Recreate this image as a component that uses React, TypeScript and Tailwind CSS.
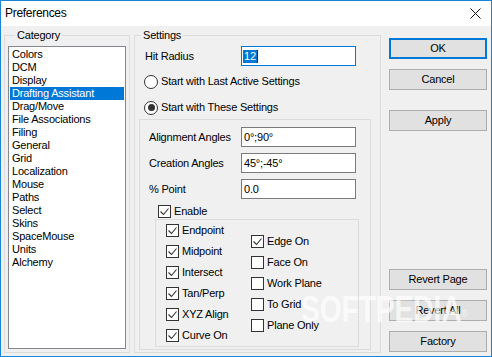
import React from "react";

const categories = [
  "Colors",
  "DCM",
  "Display",
  "Drafting Assistant",
  "Drag/Move",
  "File Associations",
  "Filing",
  "General",
  "Grid",
  "Localization",
  "Mouse",
  "Paths",
  "Select",
  "Skins",
  "SpaceMouse",
  "Units",
  "Alchemy",
];

const snapLeft = [
  { label: "Endpoint", checked: true },
  { label: "Midpoint", checked: true },
  { label: "Intersect", checked: true },
  { label: "Tan/Perp", checked: true },
  { label: "XYZ Align", checked: true },
  { label: "Curve On", checked: true },
];

const snapRight = [
  { label: "Edge On", checked: true },
  { label: "Face On", checked: false },
  { label: "Work Plane", checked: false },
  { label: "To Grid", checked: false },
  { label: "Plane Only", checked: false },
];

function Check({ checked }: { checked?: boolean }) {
  return (
    <span className="flex h-[13px] w-[13px] shrink-0 items-center justify-center border border-[#333] bg-white">
      {checked && (
        <svg width="11" height="11" viewBox="0 0 11 11">
          <path d="M1.5 5.5 L4.5 8.5 L9.5 2.5" fill="none" stroke="#333" strokeWidth="1.1" />
        </svg>
      )}
    </span>
  );
}

function CheckRow({ label, checked }: { label: string; checked?: boolean }) {
  return (
    <div className="flex h-[21px] items-center gap-[3px]">
      <Check checked={checked} />
      <span>{label}</span>
    </div>
  );
}

function Radio({ checked, label }: { checked?: boolean; label: string }) {
  return (
    <div className="flex h-[13px] items-center gap-[3px]">
      <span className="flex h-[14px] w-[14px] items-center justify-center rounded-full border border-[#333] bg-white">
        {checked && <span className="h-[7px] w-[7px] rounded-full bg-[#333]" />}
      </span>
      <span>{label}</span>
    </div>
  );
}

function Field({ label, value }: { label: string; value: string }) {
  return (
    <div className="flex h-[20px] items-center">
      <span className="w-[92px]">{label}</span>
      <div className="flex h-[20px] w-[115px] items-center border border-[#7a7a7a] bg-white pl-[2px]">{value}</div>
    </div>
  );
}

function Btn({ children, primary }: { children: React.ReactNode; primary?: boolean }) {
  return (
    <div
      className={
        primary
          ? "flex h-[21px] w-[98px] items-center justify-center border-2 border-[#0078d7] bg-[#e1e1e1]"
          : "flex h-[21px] w-[98px] items-center justify-center border border-[#adadad] bg-[#e1e1e1]"
      }
    >
      {children}
    </div>
  );
}

export default function App() {
  return (
    <div className="relative flex h-[357px] w-[492px] flex-col border border-[#1883d7] bg-[#f0f0f0] font-['Liberation_Sans',Arial,sans-serif] text-[11px] leading-[13px] tracking-[-0.2px] text-black">
      {/* title bar */}
      <div className="flex h-[25px] shrink-0 items-center justify-between bg-white pl-[4px] pr-[10px] text-[12px] tracking-[-0.3px]">
        <span>Preferences</span>
        <svg width="11" height="11" viewBox="0 0 11 11">
          <path d="M0.5 0.5 L10.5 10.5 M10.5 0.5 L0.5 10.5" stroke="#111" strokeWidth="1" />
        </svg>
      </div>

      <div className="flex flex-1 pt-[3px]">
        {/* Category */}
        <fieldset className="ml-[3px] flex h-[324px] w-[126px] flex-col border border-[#dcdcdc] px-[3px]">
          <legend className="ml-[7px] px-[2px] leading-[13px]">Category</legend>
          <div className="mt-[4px] h-[303px] w-[118px] border border-[#828790] bg-white p-[1px]">
            {categories.map((c) => (
              <div
                key={c}
                className={
                  c === "Drafting Assistant"
                    ? "h-[13px] bg-[#0078d7] pl-[2px] leading-[13px] text-white"
                    : "h-[13px] pl-[2px] leading-[13px]"
                }
              >
                {c}
              </div>
            ))}
          </div>
        </fieldset>

        {/* Settings */}
        <fieldset className="ml-[4px] flex h-[324px] w-[247px] flex-col border border-[#dcdcdc] pb-[2px]">
          <legend className="ml-[6px] px-[2px] leading-[13px]">Settings</legend>

          <div className="mt-[4px] flex h-[20px] items-center pl-[10px]">
            <span className="w-[96px]">Hit Radius</span>
            <div className="flex h-[20px] w-[115px] items-center border border-[#0078d7] bg-white pl-[1px]">
              <span className="bg-[#0078d7] px-[1px] text-white">12</span>
              <span className="h-[13px] w-[1px] bg-[#222]" />
            </div>
          </div>

          <div className="mt-[9px] pl-[9px]">
            <Radio label="Start with Last Active Settings" />
          </div>
          <div className="mt-[13px] pl-[9px]">
            <Radio checked label="Start with These Settings" />
          </div>

          <div className="ml-[4px] mt-[5px] flex w-[232px] flex-1 flex-col border border-[#dcdcdc] pb-[2px]">
            <div className="mt-[7px] flex flex-col gap-[6px] pl-[9px]">
              <Field label="Alignment Angles" value="0°;90°" />
              <Field label="Creation Angles" value="45°;-45°" />
              <Field label="% Point" value="0.0" />
            </div>

            <div className="mt-[6px] flex h-[13px] items-center gap-[3px] pl-[18px]">
              <Check checked />
              <span>Enable</span>
            </div>

            <div className="ml-[15px] mt-[1px] flex h-[128px] w-[204px] border border-[#dcdcdc]">
              <div className="w-[95px] pl-[10px]">
                {snapLeft.map((s) => (
                  <CheckRow key={s.label} label={s.label} checked={s.checked} />
                ))}
              </div>
              <div className="pt-[11px]">
                {snapRight.map((s) => (
                  <CheckRow key={s.label} label={s.label} checked={s.checked} />
                ))}
              </div>
            </div>
          </div>
        </fieldset>

        {/* Buttons */}
        <div className="ml-[8px] flex flex-col pb-[4px]">
          <div className="mt-[9px]">
            <Btn primary>OK</Btn>
          </div>
          <div className="mt-[10px]">
            <Btn>Cancel</Btn>
          </div>
          <div className="mt-[20px]">
            <Btn>Apply</Btn>
          </div>
          <div className="flex-1" />
          <Btn>Revert Page</Btn>
          <div className="mt-[10px]">
            <Btn>Revert All</Btn>
          </div>
          <div className="mt-[10px]">
            <Btn>Factory</Btn>
          </div>
        </div>
      </div>

      {/* watermark */}
      <span className="pointer-events-none absolute left-[300px] top-[291px] origin-left scale-x-[0.78] text-[36px] font-bold leading-none tracking-normal text-white/70">
        SOFTPEDIA<sup className="text-[10px] font-normal">®</sup>
      </span>
    </div>
  );
}
